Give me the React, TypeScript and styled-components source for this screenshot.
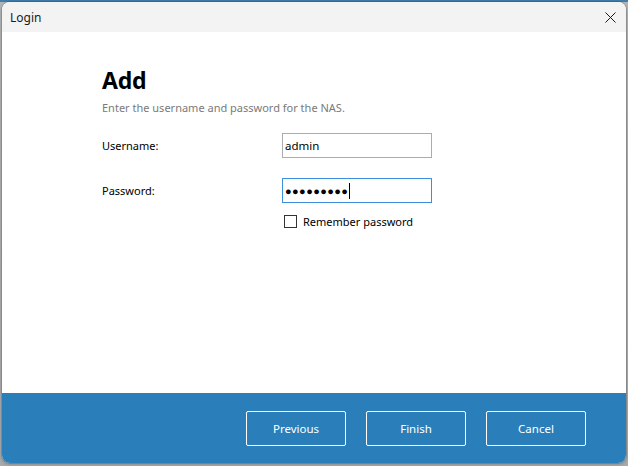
import React from "react"
import styled, { createGlobalStyle } from "styled-components"

const GlobalStyle = createGlobalStyle`
  html, body {
    margin: 0;
    padding: 0;
    width: 628px;
    height: 466px;
    overflow: hidden;
  }
  body {
    font-family: "Noto Sans", "Open Sans", sans-serif;
  }
`

const Desktop = styled.div`
  width: 628px;
  height: 466px;
  box-sizing: border-box;
  padding: 2px 2px 3px 2px;
  background: linear-gradient(180deg, #3f7eae 0, #3f7eae 2px, #b4b6b8 2px, #a9abad 100%);
`

const Window = styled.div`
  width: 624px;
  height: 461px;
  display: flex;
  flex-direction: column;
  border-radius: 8px;
  overflow: hidden;
  background: #ffffff;
  box-shadow: 0 0 0 1px rgba(0, 0, 0, 0.12), 0 1px 4px rgba(0, 0, 0, 0.25);
`

const TitleBar = styled.div`
  height: 30px;
  flex: none;
  display: flex;
  align-items: center;
  justify-content: space-between;
  background: #f3f3f3;
  padding: 0 9px 0 8px;
  font-size: 12px;
  color: #1a1a1a;
`

const CloseButton = styled.div`
  width: 14px;
  height: 14px;
  display: flex;
  align-items: center;
  justify-content: center;
`

const Body = styled.div`
  flex: 1;
  padding: 33px 0 0 100px;
  display: flex;
  flex-direction: column;
`

const Heading = styled.h1`
  margin: 0;
  font-size: 23px;
  font-weight: 700;
  color: #000;
  line-height: 30px;
  letter-spacing: -0.2px;
`

const Subtitle = styled.div`
  margin-top: 6px;
  font-size: 11px;
  color: #7a7a7a;
  line-height: 14px;
`

const Form = styled.div`
  margin-top: 18px;
  display: grid;
  grid-template-columns: 180px 150px;
  row-gap: 20px;
  align-items: center;
`

const Label = styled.div`
  font-size: 11px;
  color: #000;
`

const Field = styled.div<{ $focused?: boolean }>`
  height: 25px;
  box-sizing: border-box;
  border: 1px solid ${(p) => (p.$focused ? "#3d8fdc" : "#acacac")};
  display: flex;
  align-items: center;
  padding: 0 2px;
  font-size: 11.5px;
  color: #000;
  background: #fff;
`

const Dots = styled.span`
  font-size: 11px;
  letter-spacing: 0.4px;
  line-height: 1;
`

const Caret = styled.span`
  display: inline-block;
  width: 1px;
  height: 16px;
  background: #000;
  margin-left: 1px;
`

const CheckRow = styled.label`
  grid-column: 2;
  margin-top: -9px;
  display: flex;
  align-items: center;
  gap: 6px;
  font-size: 11px;
  color: #000;
  padding-left: 2px;
`

const Box = styled.span`
  width: 13px;
  height: 13px;
  box-sizing: border-box;
  border: 1px solid #333;
  background: #fff;
`

const Footer = styled.div`
  height: 70px;
  flex: none;
  background: #2a7fba;
  display: flex;
  justify-content: flex-end;
  align-items: flex-start;
  gap: 20px;
  padding: 18px 40px 0 0;
  box-sizing: border-box;
`

const FooterButton = styled.button`
  width: 100px;
  height: 35px;
  border: 1px solid #ffffff;
  border-radius: 2px;
  background: transparent;
  color: #fff;
  font-family: inherit;
  font-size: 11.5px;
  padding: 0;
`

export default function App() {
  return (
    <>
      <GlobalStyle />
      <Desktop>
        <Window>
          <TitleBar>
            <span>Login</span>
            <CloseButton>
              <svg width="11" height="11" viewBox="0 0 11 11">
                <path d="M0.5 0.5 L10.5 10.5 M10.5 0.5 L0.5 10.5" stroke="#1a1a1a" strokeWidth="1" />
              </svg>
            </CloseButton>
          </TitleBar>
          <Body>
            <Heading>Add</Heading>
            <Subtitle>Enter the username and password for the NAS.</Subtitle>
            <Form>
              <Label>Username:</Label>
              <Field>admin</Field>
              <Label>Password:</Label>
              <Field $focused>
                <Dots>●●●●●●●●●</Dots>
                <Caret />
              </Field>
              <CheckRow>
                <Box />
                Remember password
              </CheckRow>
            </Form>
          </Body>
          <Footer>
            <FooterButton>Previous</FooterButton>
            <FooterButton>Finish</FooterButton>
            <FooterButton>Cancel</FooterButton>
          </Footer>
        </Window>
      </Desktop>
    </>
  )
}
